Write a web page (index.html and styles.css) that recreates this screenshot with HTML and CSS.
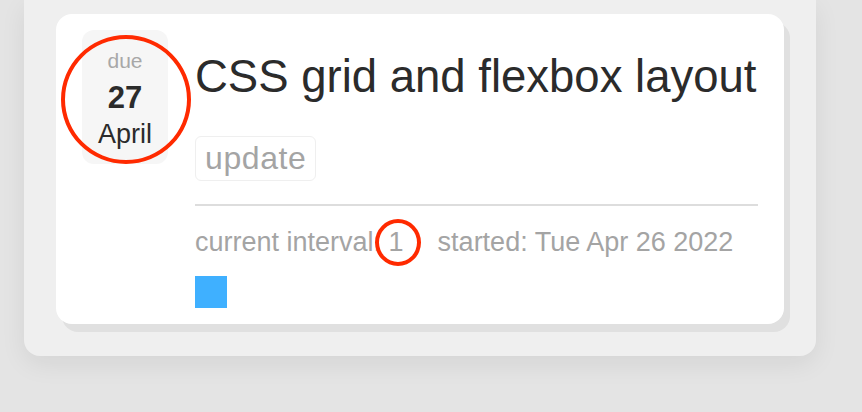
FILE: index.html
```html
<!DOCTYPE html>
<html>
    <head>
        <title>Cards</title>
        <link rel="stylesheet" href="styles.css">
    </head>
    <body>
        <div class="Panel">
            <div class="Card">
                <div class="DueBox">
                    <span class="DueLabel">due</span>
                    <span class="DueDay">27</span>
                    <span class="DueMonth">April</span>
                    <span class="Mark MarkDate"></span>
                </div>
                <div class="CardBody">
                    <h1 class="CardTitle">CSS grid and flexbox layout</h1>
                    <div class="TagRow"><span class="Tag">update</span></div>
                    <hr class="Divider">
                    <div class="Info">
                        <span class="Interval">current interval: <span class="IntervalValue">1<span class="Mark MarkInterval"></span></span></span>
                        <span>started: Tue Apr 26 2022</span>
                    </div>
                    <div class="Swatch"></div>
                </div>
            </div>
        </div>
    </body>
</html>
```

FILE: styles.css
```css
body{
    margin: 0;
    height: 412px;
    overflow: hidden;
    background-color: #e4e4e4;
    font-family: "Liberation Sans", Arial, sans-serif;
}

.Panel{
    width: 728px;
    margin-left: 24px;
    padding: 14px 32px 32px 32px;
    background-color: #efefef;
    border-radius: 0 0 16px 16px;
    box-shadow: 0 8px 26px rgba(0,0,0,0.07);
}

.Card{
    display: flex;
    gap: 27px;
    padding: 16px 26px;
    background-color: white;
    border-radius: 16px;
    box-shadow: 6px 8px 0 #e0e0e0;
}

.DueBox{
    position: relative;
    width: 86px;
    height: 134px;
    flex-shrink: 0;
    display: flex;
    flex-direction: column;
    align-items: center;
    background-color: #f6f6f6;
    border-radius: 12px;
}

.DueLabel{
    margin-top: 19px;
    font-size: 21px;
    line-height: 24px;
    color: #a8a8a8;
}

.DueDay{
    margin-top: 8px;
    font-size: 31px;
    line-height: 34px;
    font-weight: bold;
    color: #2b2b2b;
}

.DueMonth{
    margin-top: 4px;
    font-size: 27px;
    line-height: 30px;
    color: #2b2b2b;
}

.Mark{
    position: absolute;
    border: 4px solid #ff2a00;
    border-radius: 50%;
    box-sizing: border-box;
    pointer-events: none;
}

.MarkDate{
    left: -21px;
    top: 5px;
    width: 130px;
    height: 129px;
}

.CardBody{
    flex: 1;
    min-width: 0;
    display: flex;
    flex-direction: column;
}

.CardTitle{
    margin: 20px 0 0 0;
    font-size: 45.5px;
    line-height: 53px;
    font-weight: normal;
    color: #2b2b2b;
    white-space: nowrap;
}

.TagRow{
    display: flex;
    margin-top: 33px;
}

.Tag{
    padding: 3px 9px;
    font-size: 32px;
    line-height: 37px;
    letter-spacing: 0.6px;
    color: #a4a4a4;
    border: 1px solid #efefef;
    border-radius: 6px;
}

.Divider{
    width: 100%;
    margin: 23px 0 0 0;
    border: none;
    height: 2px;
    background-color: #dddddd;
}

.Info{
    display: flex;
    gap: 34px;
    margin-top: 21px;
    font-size: 27px;
    line-height: 31px;
    color: #a4a4a4;
    white-space: nowrap;
}

.IntervalValue{
    position: relative;
}

.MarkInterval{
    left: -14px;
    top: -8px;
    width: 46px;
    height: 47px;
}

.Swatch{
    width: 32px;
    height: 32px;
    margin-top: 18px;
    background-color: #3fb0ff;
}
```
